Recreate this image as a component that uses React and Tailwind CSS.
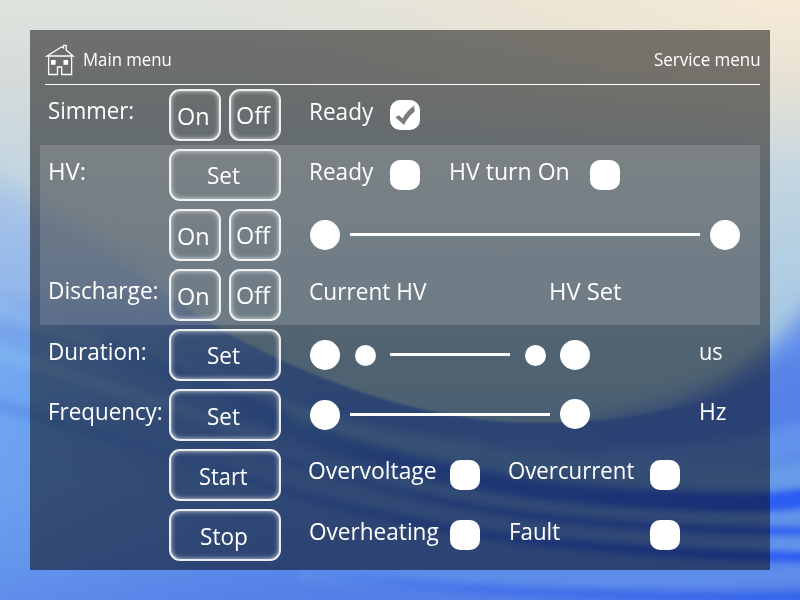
import { useLayoutEffect, useRef, useState } from "react";

const FONT = "font-['Open_Sans','Noto_Sans',sans-serif]";

/* Text squeezed horizontally so that it fills a given width. */
function Fit({ width, children }) {
  const ref = useRef(null);
  const [scale, setScale] = useState(1);
  useLayoutEffect(() => {
    setScale(width / ref.current.offsetWidth);
  }, [width]);
  return (
    <span className="block shrink-0 whitespace-nowrap" style={{ width }}>
      <span ref={ref} className="inline-block origin-left" style={{ transform: `scaleX(${scale})` }}>
        {children}
      </span>
    </span>
  );
}

function Label({ w, className = "", children }) {
  return (
    <div className={`shrink-0 self-start text-[24.5px] leading-[32px] ${className}`}>
      <Fit width={w}>{children}</Fit>
    </div>
  );
}

function Button({ wide, w, lower, children }) {
  return (
    <button
      className={`flex h-[52px] shrink-0 justify-center rounded-[11px] border-2 border-white/90 pr-[3px] text-[24.5px] leading-[32px] shadow-[inset_0_0_5px_rgba(255,255,255,0.8)] ${
        wide ? "w-[112px]" : "w-[52px]"
      } ${lower ? "pt-[9px]" : "pt-[8px]"}`}
    >
      <Fit width={w}>{children}</Fit>
    </button>
  );
}

function Row({ label, labelWidth, labelClass = "mt-[9px]", buttons, children }) {
  return (
    <div className="flex h-[60px] items-center">
      <div className="flex w-[129px] shrink-0 self-stretch pl-[8px]">
        {label && (
          <Label w={labelWidth} className={labelClass}>
            {label}
          </Label>
        )}
      </div>
      <div className="flex w-[112px] shrink-0 gap-2">{buttons}</div>
      <div className="flex flex-1 items-center self-stretch pl-[27px]">{children}</div>
    </div>
  );
}

function Check({ checked }) {
  return (
    <div className="size-[30px] shrink-0 rounded-[10px] bg-white">
      {checked && (
        <svg viewBox="0 0 30 30" className="size-[30px]">
          <path d="M5.3 17.3 L9 15.2 L12.6 18.4 Q17 10.5 24 5.8 L24.8 11.5 Q18 16.5 14 25 Z" fill="#7c7c80" />
        </svg>
      )}
    </div>
  );
}

function Dot({ small, className = "" }) {
  return <div className={`shrink-0 rounded-full bg-white ${small ? "size-[21px]" : "size-[30px]"} ${className}`} />;
}

function Track({ className }) {
  return <div className={`-mt-px h-[3px] shrink-0 bg-white ${className}`} />;
}

const OnOff = (
  <>
    <Button w={32.5} lower>On</Button>
    <Button w={34.5}>Off</Button>
  </>
);

function Wallpaper() {
  return (
    <svg viewBox="0 0 800 600" className="absolute inset-0 h-[600px] w-[800px]" preserveAspectRatio="none">
      <defs>
        <linearGradient id="sky" x1="0" y1="0" x2="0" y2="1">
          <stop offset="0" stopColor="#e0e4de" />
          <stop offset="0.13" stopColor="#d5dbda" />
          <stop offset="0.25" stopColor="#c8d8e0" />
          <stop offset="0.42" stopColor="#b4cfe2" />
          <stop offset="0.56" stopColor="#a6c8e2" />
          <stop offset="0.7" stopColor="#94c0e4" />
        </linearGradient>
        <radialGradient id="warm" cx="0" cy="0" r="1" gradientUnits="userSpaceOnUse" gradientTransform="translate(800 0) scale(620 170)">
          <stop offset="0" stopColor="#f6ead6" />
          <stop offset="0.5" stopColor="#efe5d2" stopOpacity="0.65" />
          <stop offset="1" stopColor="#e6e0d2" stopOpacity="0" />
        </radialGradient>
        <linearGradient id="haze" x1="0" y1="150" x2="0" y2="420" gradientUnits="userSpaceOnUse">
          <stop offset="0" stopColor="#bad0e2" />
          <stop offset="0.3" stopColor="#a0bee8" />
          <stop offset="0.6" stopColor="#8eb5ec" />
          <stop offset="1" stopColor="#72a8f0" />
        </linearGradient>
        <linearGradient id="sea" x1="0" y1="285" x2="0" y2="600" gradientUnits="userSpaceOnUse">
          <stop offset="0" stopColor="#7aa4ec" stopOpacity="0" />
          <stop offset="0.24" stopColor="#6490e6" />
          <stop offset="0.42" stopColor="#5888e6" />
          <stop offset="0.65" stopColor="#6494e6" />
          <stop offset="1" stopColor="#527de8" />
        </linearGradient>
        <linearGradient id="left" x1="0" y1="0" x2="330" y2="0" gradientUnits="userSpaceOnUse">
          <stop offset="0" stopColor="#80bcf8" stopOpacity="1" />
          <stop offset="1" stopColor="#6aa4f0" stopOpacity="0" />
        </linearGradient>
        <linearGradient id="fade" x1="0" y1="400" x2="0" y2="600" gradientUnits="userSpaceOnUse">
          <stop offset="0" stopColor="#5684ea" stopOpacity="0" />
          <stop offset="0.75" stopColor="#5a8ae8" stopOpacity="0.8" />
          <stop offset="1" stopColor="#5680e6" />
        </linearGradient>
        <linearGradient id="band" x1="200" y1="0" x2="800" y2="0" gradientUnits="userSpaceOnUse">
          <stop offset="0" stopColor="#4878e4" stopOpacity="0.1" />
          <stop offset="0.4" stopColor="#3868e6" stopOpacity="0.75" />
          <stop offset="1" stopColor="#2a5cf2" />
        </linearGradient>
        <linearGradient id="crest" x1="280" y1="0" x2="800" y2="0" gradientUnits="userSpaceOnUse">
          <stop offset="0" stopColor="#3f6eea" stopOpacity="0" />
          <stop offset="0.3" stopColor="#3f6eea" stopOpacity="0.7" />
          <stop offset="1" stopColor="#2f5fee" />
        </linearGradient>
        <filter id="b2" x="-10%" y="-10%" width="120%" height="120%"><feGaussianBlur stdDeviation="1.2" /></filter>
        <filter id="b3" x="-10%" y="-20%" width="120%" height="140%"><feGaussianBlur stdDeviation="3" /></filter>
        <filter id="b5" x="-10%" y="-20%" width="120%" height="140%"><feGaussianBlur stdDeviation="5" /></filter>
        <filter id="b12" x="-20%" y="-20%" width="140%" height="140%"><feGaussianBlur stdDeviation="11" /></filter>
      </defs>
      <rect width="800" height="600" fill="url(#sky)" />
      <rect width="800" height="600" fill="url(#warm)" />
      <path d="M-40 145 C20 200 80 225 130 262 C170 295 195 330 225 360 L230 640 L-40 640 Z" fill="url(#haze)" filter="url(#b12)" />
      {/* right-hand shoulder of the bowl, soft edged */}
      <path d="M600 430 C690 412 765 375 840 265 L840 640 L560 640 Z" fill="#6692ea" filter="url(#b12)" />
      <path d="M60 240 C110 255 150 282 192 312 C240 342 285 364 330 381 C390 404 450 420 520 423 C560 424 600 422 630 417 L630 500 L200 460 Z" fill="url(#haze)" filter="url(#b2)" />
      <path d="M-20 285 L150 282 L192 312 C240 342 285 364 330 381 C390 404 450 420 520 423 C560 424 600 422 640 415 C700 405 745 388 785 360 L830 420 L830 640 L-20 640 Z" fill="url(#sea)" filter="url(#b2)" />
      <path d="M580 424 C690 415 750 375 830 335 L830 440 L600 460 Z" fill="#5580e8" opacity="0.75" filter="url(#b12)" />
      <rect x="-60" y="340" width="390" height="320" fill="url(#left)" opacity="0.6" filter="url(#b12)" />
      <g fill="none" filter="url(#b5)">
        <path d="M-20 300 C60 340 160 350 270 400 S420 440 480 450" stroke="#94c6f2" strokeWidth="12" opacity="0.4" />
        <path d="M-20 345 C60 375 160 400 270 440" stroke="#90c4f2" strokeWidth="12" opacity="0.4" />
        <path d="M100 345 C160 365 220 380 290 420 S420 462 500 475" stroke="#4880e6" strokeWidth="14" opacity="0.55" />
        <path d="M-20 400 C60 420 150 450 250 480 S400 520 560 545" stroke="#4a7ce6" strokeWidth="10" opacity="0.45" />
        <path d="M290 415 C400 450 500 462 640 472 S780 478 830 470" stroke="#78b0ea" strokeWidth="22" opacity="0.55" />
        <path d="M600 460 C700 464 780 446 830 426" stroke="#70a4f0" strokeWidth="26" opacity="0.5" />
      </g>
      <rect y="400" width="800" height="200" fill="url(#fade)" opacity="0.6" />
      <g fill="none" filter="url(#b3)">
        <path d="M240 405 C360 458 480 490 620 498 S770 504 830 494" stroke="url(#band)" strokeWidth="19" />
        <path d="M250 440 C360 478 480 504 620 512 S770 518 830 518" stroke="#6498ec" strokeWidth="8" opacity="0.7" />
        <path d="M200 430 C340 480 450 508 560 519 S740 531 830 531" stroke="url(#band)" strokeWidth="7" />
        <path d="M240 465 C360 505 480 533 620 539 S770 546 830 545" stroke="#6498ec" strokeWidth="11" opacity="0.7" />
        <path d="M220 470 C350 512 460 534 560 543 S740 557 830 557" stroke="url(#band)" strokeWidth="11" />
        <path d="M300 573 C420 577 640 585 830 573" stroke="#5f90ea" strokeWidth="16" opacity="0.75" />
        <path d="M290 566 C400 588 500 590 620 595 S770 598 830 596" stroke="url(#crest)" strokeWidth="12" opacity="0.85" />
      </g>
    </svg>
  );
}

function HomeIcon() {
  return (
    <svg viewBox="45 44 30 32" className="h-8 w-[30px] shrink-0" fill="none" stroke="white" strokeWidth="1.3">
      <path d="M47 56 L61.5 47 L63.5 48 V45.4 H66.2 V50.2 L73.2 56 Z" />
      <path d="M48.6 56.5 V74.5 H57.5 V67 H61.7 V74.5 H71.6 V56.5" />
      <path d="M51 60 h4.6 v4.8 h-4.6 z M63.5 60 h4.6 v4.8 h-4.6 z" fill="white" stroke="none" />
    </svg>
  );
}

export default function App() {
  return (
    <div className={`relative h-[600px] w-[800px] overflow-hidden p-[30px] text-white ${FONT}`}>
      <Wallpaper />
      <main className="relative h-[540px] w-[740px] bg-black/50 px-[10px]">
        <header className="ml-[5px] flex h-[55px] items-center border-b border-white pt-[6px] text-[18px] leading-6">
          <HomeIcon />
          <div className="-mt-[2px] ml-[8px] flex-1">
            <Fit width={88.5}>Main menu</Fit>
          </div>
          <div className="-mt-[2px]">
            <Fit width={106.5}>Service menu</Fit>
          </div>
        </header>

        <Row label="Simmer:" labelWidth={86} buttons={OnOff}>
          <Label w={64.5} className="mt-[10px] mr-[17px] ml-[0.5px]">Ready</Label>
          <Check checked />
        </Row>

        <section className="bg-white/15">
          <Row label="HV:" labelWidth={38} labelClass="mt-[10px]" buttons={<Button wide w={33}>Set</Button>}>
            <Label w={64.5} className="mt-[10px] mr-[17px] ml-[0.5px]">Ready</Label>
            <Check />
            <Label w={120.5} className="mt-[10px] mr-[20.5px] ml-[29px]">HV turn On</Label>
            <Check />
          </Row>
          <Row buttons={OnOff}>
            <Dot className="ml-[2px]" />
            <Track className="ml-[10px] w-[350px]" />
            <Dot className="ml-[10px]" />
          </Row>
          <Row label="Discharge:" labelWidth={111} buttons={OnOff}>
            <Label w={117.5} className="mt-[10px] ml-[0.5px]">Current HV</Label>
            <Label w={72.5} className="mt-[10px] ml-[123px]">HV Set</Label>
          </Row>
        </section>

        <Row label="Duration:" labelWidth={99} labelClass="mt-[10px]" buttons={<Button wide w={33}>Set</Button>}>
          <Dot className="ml-[2px]" />
          <Dot small className="ml-[15px] mt-px" />
          <Track className="ml-[14px] w-[120px]" />
          <Dot small className="ml-[15px] mt-px" />
          <Dot className="ml-[14px]" />
          <Label w={24} className="mt-[10px] ml-[109px]">us</Label>
        </Row>
        <Row label="Frequency:" labelWidth={115} labelClass="mt-[10px]" buttons={<Button wide w={33} lower>Set</Button>}>
          <Dot className="ml-[2px]" />
          <Track className="ml-[10px] w-[200px]" />
          <Dot className="-mt-[2px] ml-[10px]" />
          <Label w={28} className="mt-[10px] ml-[108.5px]">Hz</Label>
        </Row>
        <Row buttons={<Button wide w={49} lower>Start</Button>}>
          <Label w={129} className="mt-[9px] mr-[13px]">Overvoltage</Label>
          <Check />
          <Label w={126} className="mt-[9px] mr-[16px] ml-[28px]">Overcurrent</Label>
          <Check />
        </Row>
        <Row buttons={<Button wide w={48} lower>Stop</Button>}>
          <Label w={130} className="mt-[10px] mr-[11.5px] ml-[0.5px]">Overheating</Label>
          <Check />
          <Label w={51} className="mt-[10px] mr-[90.5px] ml-[28.5px]">Fault</Label>
          <Check />
        </Row>
      </main>
    </div>
  );
}
